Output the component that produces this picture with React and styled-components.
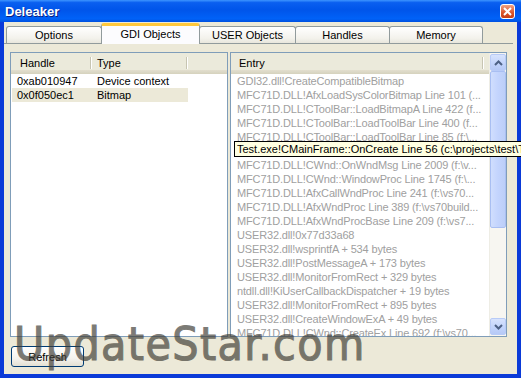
import styled, { createGlobalStyle } from "styled-components";

const GlobalStyle = createGlobalStyle`
    html, body {
        margin: 0;
        padding: 0;
        background: #ffffff;
    }
    body {
        font-family: "Liberation Sans", Arial, sans-serif;
        font-size: 11px;
    }
    * {
        box-sizing: border-box;
    }
`;

const Window = styled.div`
    width: 521px;
    height: 378px;
    display: flex;
    flex-direction: column;
    position: relative;
    overflow: hidden;
`;

const TitleBar = styled.div`
    height: 22px;
    flex: none;
    display: flex;
    align-items: center;
    padding: 0 6px 0 5px;
    background: linear-gradient(
        to bottom,
        #3d95ff 0%,
        #0a5ff0 12%,
        #0055ea 45%,
        #0062f8 85%,
        #0050e0 100%
    );
`;

const Title = styled.span`
    color: #ffffff;
    font-family: "Liberation Sans", Arial, sans-serif;
    font-weight: bold;
    font-size: 13px;
    text-shadow: 1px 1px 0 #0a1e80;
`;

const CloseButton = styled.div`
    margin-left: auto;
    width: 15px;
    height: 15px;
    border: 1px solid #ffffff;
    border-radius: 3px;
    background: linear-gradient(to bottom, #f0a283, #d9542a 60%, #c43e17);
    display: flex;
    align-items: center;
    justify-content: center;
`;

const Body = styled.div`
    flex: 1;
    display: flex;
    flex-direction: column;
    background: #ece9d8;
    border: 4px solid #0a3ad8;
    border-top: none;
`;

const TabStrip = styled.div`
    height: 21px;
    flex: none;
    display: flex;
    align-items: flex-end;
    padding-left: 2px;
    position: relative;
    z-index: 1;
`;

const Tab = styled.div`
    width: ${p => p.w}px;
    height: ${p => (p.active ? 21 : 17)}px;
    margin-bottom: ${p => (p.active ? -1 : 0)}px;
    margin-left: ${p => (p.first ? 0 : -1)}px;
    display: flex;
    align-items: center;
    justify-content: center;
    color: #000000;
    font-size: 11px;
    border: 1px solid #919b9c;
    border-bottom: none;
    border-top: ${p => (p.active ? "3px solid #ffc83c" : "1px solid #919b9c")};
    border-radius: 3px 3px 0 0;
    background: ${p =>
        p.active ? "#fcfcfe" : "linear-gradient(to bottom, #ffffff, #f3f2ec 70%, #e8e6dc)"};
    padding-bottom: ${p => (p.active ? 2 : 0)}px;
`;

const Panel = styled.div`
    flex: 1;
    margin-right: 4px;
    border-top: 1px solid #919b9c;
    padding: 8px 0 0 6px;
    display: flex;
    flex-direction: column;
`;

const ListsRow = styled.div`
    display: flex;
    gap: 2px;
    height: 285px;
`;

const ListBox = styled.div`
    width: ${p => p.w}px;
    height: 100%;
    border: 1px solid #7f9db9;
    background: #ffffff;
    display: flex;
    overflow: hidden;
`;

const ListMain = styled.div`
    flex: 1;
    display: flex;
    flex-direction: column;
    overflow: hidden;
`;

const Header = styled.div`
    height: 21px;
    flex: none;
    display: flex;
    background: linear-gradient(
        to bottom,
        #ebeadb 0,
        #ebeadb 17px,
        #e2decd 17px,
        #dbd8c6 19px,
        #d6d2bd 21px
    );
`;

const HeaderCell = styled.div`
    width: ${p => p.w}px;
    flex: none;
    position: relative;
    padding-left: ${p => p.pad || 9}px;
    line-height: 20px;
    color: #000000;
    white-space: nowrap;

    &:after {
        content: "";
        position: absolute;
        right: 0;
        top: 4px;
        bottom: 5px;
        width: 1px;
        background: #c7c5b2;
        box-shadow: 1px 0 0 #ffffff;
    }
`;

const Row = styled.div`
    width: ${p => p.w}px;
    height: 14px;
    flex: none;
    display: flex;
    background: ${p => (p.selected ? "#ece9d8" : "transparent")};
    margin-left: 1px;
`;

const Cell = styled.div`
    width: ${p => p.w}px;
    flex: none;
    padding-left: ${p => p.pad || 5}px;
    line-height: 14px;
    white-space: nowrap;
    overflow: hidden;
    color: ${p => (p.muted ? "#a0a0a0" : "#000000")};
    letter-spacing: ${p => (p.muted ? "-0.15px" : "0")};
`;

const ScrollBar = styled.div`
    width: 17px;
    flex: none;
    display: flex;
    flex-direction: column;
    background: #f7f6f1;
    border-left: 1px solid #eeede5;
    padding: 1px 0;
`;

const ScrollButton = styled.div`
    height: 17px;
    flex: none;
    border: 1px solid #b8cbf7;
    border-radius: 2px;
    background: linear-gradient(to bottom, #d7e3fd, #c1d3fb 60%, #b6c9f6);
    display: flex;
    align-items: center;
    justify-content: center;
`;

const Thumb = styled.div`
    height: 157px;
    flex: none;
    border: 1px solid #a9bff2;
    border-radius: 2px;
    background: linear-gradient(to right, #d0defd, #c3d4fd 50%, #bccff8);
`;

const Track = styled.div`
    flex: 1;
`;

const Footer = styled.div`
    padding: 9px 0 0 1px;
`;

const Button = styled.div`
    width: 73px;
    height: 21px;
    border: 1px solid #003c74;
    border-radius: 3px;
    background: linear-gradient(to bottom, #ffffff, #f4f3ee 60%, #e3e0d2);
    display: flex;
    align-items: center;
    justify-content: center;
    color: #000000;
    font-size: 11px;
`;

const Tooltip = styled.div`
    position: absolute;
    left: 234px;
    top: 141px;
    height: 16px;
    padding: 0 2px;
    border: 1px solid #000000;
    background: #ffffe1;
    color: #000000;
    white-space: nowrap;
    line-height: 14px;
    font-size: 11px;
    z-index: 3;
`;

const Watermark = styled.div`
    position: absolute;
    left: 14px;
    top: 321px;
    font-family: "DejaVu Sans Condensed", "DejaVu Sans", Verdana, sans-serif;
    font-stretch: semi-condensed;
    font-size: 46px;
    line-height: 1;
    letter-spacing: 1.4px;
    color: #3f3d36;
    -webkit-text-stroke: 1.1px #3f3d36;
    opacity: 0.68;
    white-space: nowrap;
    pointer-events: none;
    z-index: 2;
`;

const tabs = [
    { label: "Options", w: 96 },
    { label: "GDI Objects", w: 99, active: true },
    { label: "USER Objects", w: 97 },
    { label: "Handles", w: 95 },
    { label: "Memory", w: 94 },
];

const handles = [
    { handle: "0xab010947", type: "Device context" },
    { handle: "0x0f050ec1", type: "Bitmap", selected: true },
];

const entries = [
    "GDI32.dll!CreateCompatibleBitmap",
    "MFC71D.DLL!AfxLoadSysColorBitmap Line 101 (...",
    "MFC71D.DLL!CToolBar::LoadBitmapA Line 422 (f...",
    "MFC71D.DLL!CToolBar::LoadToolBar Line 400 (f...",
    "MFC71D.DLL!CToolBar::LoadToolBar Line 85 (f:\\...",
    "Test.exe!CMainFrame::OnCreate Line 56 (c:\\pr...",
    "MFC71D.DLL!CWnd::OnWndMsg Line 2009 (f:\\v...",
    "MFC71D.DLL!CWnd::WindowProc Line 1745 (f:\\...",
    "MFC71D.DLL!AfxCallWndProc Line 241 (f:\\vs70...",
    "MFC71D.DLL!AfxWndProc Line 389 (f:\\vs70build...",
    "MFC71D.DLL!AfxWndProcBase Line 209 (f:\\vs7...",
    "USER32.dll!0x77d33a68",
    "USER32.dll!wsprintfA + 534 bytes",
    "USER32.dll!PostMessageA + 173 bytes",
    "USER32.dll!MonitorFromRect + 329 bytes",
    "ntdll.dll!KiUserCallbackDispatcher + 19 bytes",
    "USER32.dll!MonitorFromRect + 895 bytes",
    "USER32.dll!CreateWindowExA + 49 bytes",
    "MFC71D.DLL!CWnd::CreateEx Line 692 (f:\\vs70...",
];

const Arrow = ({ down }) => (
    <svg width="9" height="6" viewBox="0 0 9 6">
        <path
            d={down ? "M1 1 L4.5 4.5 L8 1" : "M1 5 L4.5 1.5 L8 5"}
            fill="none"
            stroke="#4d6185"
            strokeWidth="2"
        />
    </svg>
);

const App = () => {
    return (
        <>
            <GlobalStyle />
            <Window>
                <TitleBar>
                    <Title>Deleaker</Title>
                    <CloseButton>
                        <svg width="9" height="9" viewBox="0 0 9 9">
                            <path d="M1 1 L8 8 M8 1 L1 8" stroke="#ffffff" strokeWidth="2" />
                        </svg>
                    </CloseButton>
                </TitleBar>
                <Body>
                    <TabStrip>
                        {tabs.map((t, i) => (
                            <Tab key={t.label} w={t.w} active={t.active} first={i === 0}>
                                {t.label}
                            </Tab>
                        ))}
                    </TabStrip>
                    <Panel>
                        <ListsRow>
                            <ListBox w={218}>
                                <ListMain>
                                    <Header>
                                        <HeaderCell w={80}>Handle</HeaderCell>
                                        <HeaderCell w={96} pad={6}>Type</HeaderCell>
                                    </Header>
                                    {handles.map(h => (
                                        <Row key={h.handle} w={176} selected={h.selected}>
                                            <Cell w={80}>{h.handle}</Cell>
                                            <Cell w={96}>{h.type}</Cell>
                                        </Row>
                                    ))}
                                </ListMain>
                            </ListBox>
                            <ListBox w={277}>
                                <ListMain>
                                    <Header>
                                        <HeaderCell w={252} pad={8}>Entry</HeaderCell>
                                    </Header>
                                    {entries.map((e, i) => (
                                        <Row key={i} w={252}>
                                            <Cell w={252} muted>{e}</Cell>
                                        </Row>
                                    ))}
                                </ListMain>
                                <ScrollBar>
                                    <ScrollButton>
                                        <Arrow />
                                    </ScrollButton>
                                    <Thumb />
                                    <Track />
                                    <ScrollButton>
                                        <Arrow down />
                                    </ScrollButton>
                                </ScrollBar>
                            </ListBox>
                        </ListsRow>
                        <Footer>
                            <Button>Refresh</Button>
                        </Footer>
                    </Panel>
                </Body>
                <Tooltip>Test.exe!CMainFrame::OnCreate Line 56 (c:\projects\test\Test\MainFrm.cpp)</Tooltip>
                <Watermark>UpdateStar.com</Watermark>
            </Window>
        </>
    );
};

export default App;
